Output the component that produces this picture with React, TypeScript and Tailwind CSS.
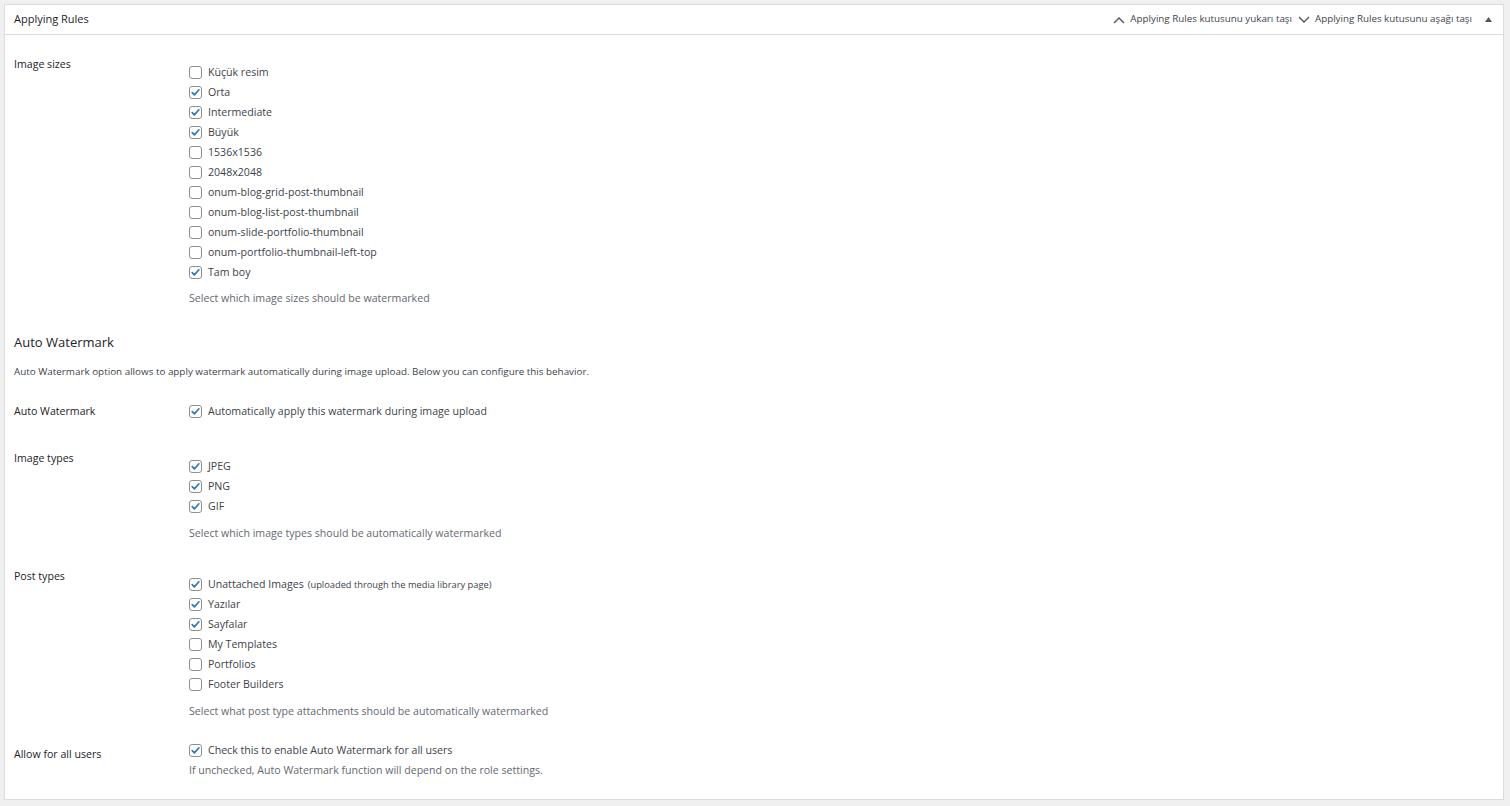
import React from 'react';

type Item = { label: string; checked: boolean; note?: string };

const imageSizes: Item[] = [
  { label: 'Küçük resim', checked: false },
  { label: 'Orta', checked: true },
  { label: 'Intermediate', checked: true },
  { label: 'Büyük', checked: true },
  { label: '1536x1536', checked: false },
  { label: '2048x2048', checked: false },
  { label: 'onum-blog-grid-post-thumbnail', checked: false },
  { label: 'onum-blog-list-post-thumbnail', checked: false },
  { label: 'onum-slide-portfolio-thumbnail', checked: false },
  { label: 'onum-portfolio-thumbnail-left-top', checked: false },
  { label: 'Tam boy', checked: true },
];

const imageTypes: Item[] = [
  { label: 'JPEG', checked: true },
  { label: 'PNG', checked: true },
  { label: 'GIF', checked: true },
];

const postTypes: Item[] = [
  { label: 'Unattached Images', checked: true, note: '(uploaded through the media library page)' },
  { label: 'Yazılar', checked: true },
  { label: 'Sayfalar', checked: true },
  { label: 'My Templates', checked: false },
  { label: 'Portfolios', checked: false },
  { label: 'Footer Builders', checked: false },
];

const Checkbox: React.FC<{ checked: boolean }> = ({ checked }) => (
  <span className="w-[13px] h-[13px] rounded-[3px] border border-[#8c8f94] bg-white flex items-center justify-center shrink-0">
    {checked && (
      <svg width="11" height="11" viewBox="0 0 11 11">
        <path d="M2.2 5.6 L4.4 7.9 L8.9 2.8" fill="none" stroke="#2f7ab8" strokeWidth="1.7" strokeLinecap="round" strokeLinejoin="round" />
      </svg>
    )}
  </span>
);

const CheckRow: React.FC<{ item: Item }> = ({ item }) => (
  <div className="h-5 flex items-center gap-[6px]">
    <Checkbox checked={item.checked} />
    <span>
      {item.label}
      {item.note && <span className="text-[9.3px] ml-1">{item.note}</span>}
    </span>
  </div>
);

const Label: React.FC<{ children: React.ReactNode; className?: string }> = ({ children, className = '' }) => (
  <div className={`w-[175px] shrink-0 font-medium text-[#1d2327] ${className}`}>{children}</div>
);

export default function App() {
  return (
    <div
      className="w-[1510px] h-[806px] bg-[#f0f0f1] pt-1 pl-1 pr-[6px] text-[10.6px] text-[#3c434a]"
      style={{ fontFamily: '"Open Sans", "Noto Sans", sans-serif' }}
    >
      <div className="h-[796px] bg-white border border-[#dcdcde] flex flex-col">
        <div className="h-[30px] border-b border-[#dcdcde] flex items-center pl-[9px] pr-[11px]">
          <span className="text-[#1d2327] text-[11px]">Applying Rules</span>
          <div className="ml-auto flex items-center text-[9.8px] text-[#3c434a]">
            <svg width="12" height="8" viewBox="0 0 12 8" className="mr-[5px]">
              <path d="M1 7 L6 2 L11 7" fill="none" stroke="#50575e" strokeWidth="1.4" />
            </svg>
            <span>Applying Rules kutusunu yukarı taşı</span>
            <svg width="12" height="8" viewBox="0 0 12 8" className="ml-[6px] mr-[5px]">
              <path d="M1 1 L6 6 L11 1" fill="none" stroke="#50575e" strokeWidth="1.4" />
            </svg>
            <span>Applying Rules kutusunu aşağı taşı</span>
            <svg width="7" height="5" viewBox="0 0 7 5" className="ml-[13px]">
              <path d="M0 5 L3.5 0 L7 5 Z" fill="#50575e" />
            </svg>
          </div>
        </div>

        <div className="pl-[9px] leading-4">
          <div className="flex mt-[21px]">
            <Label>Image sizes</Label>
            <div className="pt-[6px]">
              {imageSizes.map((i) => (
                <CheckRow key={i.label} item={i} />
              ))}
              <p className="mt-2 text-[#646970]">Select which image sizes should be watermarked</p>
            </div>
          </div>

          <h2 className="mt-[26px] text-[13px] leading-5 font-medium text-[#1d2327]">Auto Watermark</h2>
          <p className="mt-[11px] text-[9.85px] text-[#3c434a]">
            Auto Watermark option allows to apply watermark automatically during image upload. Below you can configure this behavior.
          </p>

          <div className="flex mt-[22px] items-center">
            <Label>Auto Watermark</Label>
            <CheckRow item={{ label: 'Automatically apply this watermark during image upload', checked: true }} />
          </div>

          <div className="flex mt-[29px]">
            <Label>Image types</Label>
            <div className="pt-[6px]">
              {imageTypes.map((i) => (
                <CheckRow key={i.label} item={i} />
              ))}
              <p className="mt-[9px] text-[#646970]">Select which image types should be automatically watermarked</p>
            </div>
          </div>

          <div className="flex mt-[27px]">
            <Label>Post types</Label>
            <div className="pt-[6px]">
              {postTypes.map((i) => (
                <CheckRow key={i.label} item={i} />
              ))}
              <p className="mt-[9px] text-[#646970]">Select what post type attachments should be automatically watermarked</p>
            </div>
          </div>

          <div className="flex mt-[21px]">
            <Label className="pt-[6px]">Allow for all users</Label>
            <div>
              <CheckRow item={{ label: 'Check this to enable Auto Watermark for all users', checked: true }} />
              <p className="mt-[2px] text-[#646970]">If unchecked, Auto Watermark function will depend on the role settings.</p>
            </div>
          </div>
        </div>
      </div>
    </div>
  );
}
